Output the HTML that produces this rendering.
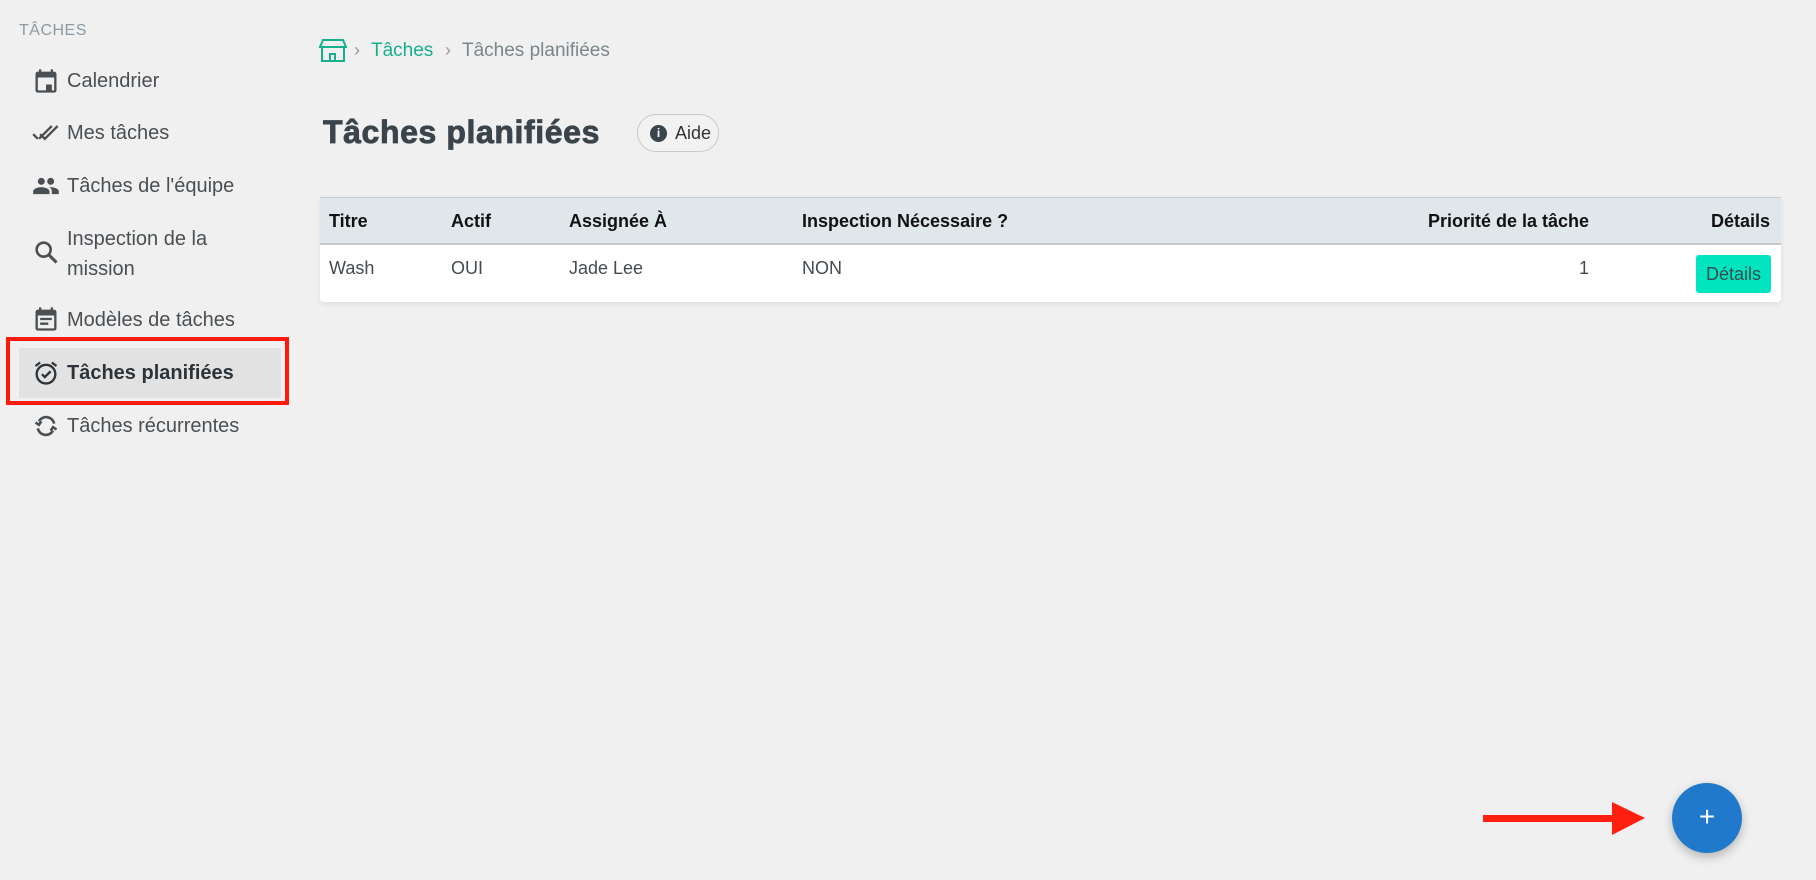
<!DOCTYPE html>
<html><head><meta charset="utf-8"><style>
*{margin:0;padding:0;box-sizing:border-box}
body{width:1816px;height:880px;background:#f0f0f0;font-family:"Liberation Sans",sans-serif;position:relative;overflow:hidden;color:#444b50}
.a{position:absolute}
.sec{left:19px;top:22px;font-size:16px;color:#8b9aa3;letter-spacing:.5px}
.it{left:67px;font-size:20px;color:#4a4f53;line-height:30px}
.ic{left:32px;width:28px;height:28px}
</style></head><body>
<div class="a sec">TÂCHES</div>
<div class="a" style="left:19px;top:348px;width:262px;height:50px;background:#e2e2e2"></div>
<div class="a" style="left:6px;top:337px;width:283px;height:68px;border:4px solid #ff1a0a"></div>

<svg class="a ic" style="top:67px" viewBox="0 0 24 24"><path fill="#4a4f53" d="M19 4h-1V2h-2v2H8V2H6v2H5a2 2 0 0 0-2 2v14a2 2 0 0 0 2 2h14a2 2 0 0 0 2-2V6a2 2 0 0 0-2-2zm0 16H5V9h14zm-7-5h5v5h-5z"/></svg>
<div class="a it" style="top:66px">Calendrier</div>
<svg class="a ic" style="top:119px" viewBox="0 0 24 24"><path fill="none" stroke="#4a4f53" stroke-width="2" d="M1 13l4 4M6 17L17 6M7 13l4 4L22 6"/></svg>
<div class="a it" style="top:118px">Mes tâches</div>
<svg class="a ic" style="top:172px" viewBox="0 0 24 24"><path fill="#4a4f53" d="M16 11a3 3 0 1 0 0-6 3 3 0 0 0 0 6zm-8 0a3 3 0 1 0 0-6 3 3 0 0 0 0 6zm0 2c-2.3 0-7 1.2-7 3.5V19h14v-2.5C15 14.2 10.300 13 8 13zm8 0c-.3 0-.6 0-1 .1 1.2.8 2 2 2 3.4V19h6v-2.5c0-2.3-4.700-3.500-7-3.500z"/></svg>
<div class="a it" style="top:171px">Tâches de l'équipe</div>
<svg class="a ic" style="top:238px" viewBox="0 0 24 24"><circle cx="10" cy="10" r="6" fill="none" stroke="#4a4f53" stroke-width="2.2"/><path d="M14.5 14.5L21 21" stroke="#4a4f53" stroke-width="2.6"/></svg>
<div class="a it" style="top:224px">Inspection de la</div>
<div class="a it" style="top:254px">mission</div>
<svg class="a ic" style="top:305px" viewBox="0 0 24 24"><path fill="#4a4f53" d="M19 4h-1V2h-2v2H8V2H6v2H5a2 2 0 0 0-2 2v14a2 2 0 0 0 2 2h14a2 2 0 0 0 2-2V6a2 2 0 0 0-2-2zm0 16H5V9h14zM7 11h10v2H7zm0 4h7v2H7z"/></svg>
<div class="a it" style="top:305px">Modèles de tâches</div>
<svg class="a ic" style="top:359px" viewBox="0 0 24 24"><circle cx="12" cy="13" r="8" fill="none" stroke="#2d3439" stroke-width="2"/><path d="M8.5 13l2.5 2.5L16 10.5M3 6l4-3M21 6l-4-3" fill="none" stroke="#2d3439" stroke-width="2"/></svg>
<div class="a it" style="top:358px;font-weight:bold;color:#2d3439">Tâches planifiées</div>
<svg class="a ic" style="top:412px" viewBox="0 0 24 24"><path fill="none" stroke="#4a4f53" stroke-width="2.2" d="M19 10a7 7 0 0 0-13-2M5 14a7 7 0 0 0 13 2M3 9l3 2 2-3M21 15l-3-2-2 3"/></svg>
<div class="a it" style="top:411px">Tâches récurrentes</div>

<svg class="a" style="left:319px;top:39px" width="28" height="24" viewBox="0 0 28 24"><path d="M4 1h20l3 7H1z M3 8v14h22V8 M11 22v-7h5v7" fill="none" stroke="#17b08c" stroke-width="2"/></svg>
<div class="a" style="left:354px;top:40px;font-size:18px;color:#999">›</div>
<div class="a" style="left:371px;top:40px;font-size:19px;color:#17b08c">Tâches</div>
<div class="a" style="left:445px;top:40px;font-size:18px;color:#999">›</div>
<div class="a" style="left:462px;top:40px;font-size:19px;color:#7b868c">Tâches planifiées</div>

<div class="a" style="left:323px;top:114px;font-size:32px;font-weight:bold;color:#3a444b;letter-spacing:0.6px;-webkit-text-stroke:0.8px #3a444b">Tâches planifiées</div>
<div class="a" style="left:637px;top:114px;width:82px;height:38px;border:1.5px solid #c9c9c9;border-radius:19px;background:#f2f2f2;font-size:18px;color:#333;padding:8px 0 0 37px">Aide</div>
<div class="a" style="left:650px;top:125px;width:17px;height:17px;border-radius:50%;background:#3a444b;color:#fff;font-size:12px;font-weight:bold;text-align:center;line-height:17px">i</div>

<div class="a" style="left:320px;top:197px;width:1461px;height:105px;background:#fff;box-shadow:0 2px 6px rgba(0,0,0,.08);border-radius:0 0 4px 4px">
<div class="a" style="left:0;top:0;width:100%;height:48px;background:#e0e7eb;border-top:1px solid #c8cdd0;border-bottom:2px solid #c3c8cb"></div>
<div class="a" style="top:14px;left:9px;font-size:18px;font-weight:bold;color:#111">Titre</div>
<div class="a" style="top:14px;left:131px;font-size:18px;font-weight:bold;color:#111">Actif</div>
<div class="a" style="top:14px;left:249px;font-size:18px;font-weight:bold;color:#111">Assignée À</div>
<div class="a" style="top:14px;left:482px;font-size:18px;font-weight:bold;color:#111">Inspection Nécessaire ?</div>
<div class="a" style="top:14px;right:192px;font-size:18px;font-weight:bold;color:#111">Priorité de la tâche</div>
<div class="a" style="top:14px;right:11px;font-size:18px;font-weight:bold;color:#111">Détails</div>
<div class="a" style="top:61px;left:9px;font-size:18px;color:#444b50">Wash</div>
<div class="a" style="top:61px;left:131px;font-size:18px;color:#444b50">OUI</div>
<div class="a" style="top:61px;left:249px;font-size:18px;color:#444b50">Jade Lee</div>
<div class="a" style="top:61px;left:482px;font-size:18px;color:#444b50">NON</div>
<div class="a" style="top:61px;right:192px;font-size:18px;color:#444b50">1</div>
<div class="a" style="top:58px;right:10px;width:75px;height:38px;background:#00e5bf;border-radius:3px;font-size:18px;color:#3a4a50;text-align:center;line-height:38px">Détails</div>
</div>

<div class="a" style="left:1483px;top:815px;width:132px;height:7px;background:#ff2010"></div>
<svg class="a" style="left:1612px;top:802px" width="34" height="34"><path d="M0 0L33 16L0 33z" fill="#ff2010"/></svg>
<div class="a" style="left:1672px;top:783px;width:70px;height:70px;border-radius:50%;background:#2179cc;box-shadow:0 4px 10px rgba(0,0,0,.25);color:#fff;font-size:28px;text-align:center;line-height:68px">+</div>
</body></html>
